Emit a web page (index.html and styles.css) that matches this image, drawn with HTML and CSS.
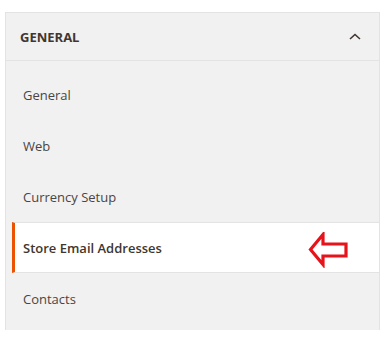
FILE: index.html
```html
<!DOCTYPE html>
<html lang="en">
<head>
    <meta charset="UTF-8">
    <meta name="viewport" content="width=device-width, initial-scale=1.0">
    <title>Configuration</title>
    <link rel="stylesheet" href="styles.css">
</head>
<body>

<div class="config-nav">
    <div class="nav-header">
        <span class="nav-title">GENERAL</span>
        <svg class="chevron" width="12" height="7" viewBox="0 0 12 7">
            <path d="M1 6 L6 1.5 L11 6" fill="none" stroke="#41362f" stroke-width="1.6"/>
        </svg>
    </div>
    <ul class="nav-items">
        <li class="nav-item">General</li>
        <li class="nav-item">Web</li>
        <li class="nav-item">Currency Setup</li>
        <li class="nav-item active">
            Store Email Addresses
            <!-- seta de anotação -->
            <svg class="pointer" width="42" height="36" viewBox="0 0 42 36">
                <polygon points="2.5,17.5 15,2.5 15,12 38,12 38,24 15,24 15,32.5" fill="none" stroke="#e8121a" stroke-width="3.2" stroke-linejoin="miter"/>
            </svg>
        </li>
        <li class="nav-item">Contacts</li>
    </ul>
</div>

</body>
</html>
```
FILE: styles.css
```css
* {
    margin: 0;
    padding: 0;
    box-sizing: border-box;
}

body {
    font-family: "Open Sans", Arial, sans-serif;
    background-color: #fff;
    color: #41362f;
    padding: 12px 0 0 5px;
}

.config-nav {
    width: 375px;
    height: 318px;
    background-color: #f1f1f1;
    border: 1px solid #e3e3e3;
    border-bottom: none;
}

.nav-header {
    display: flex;
    justify-content: space-between;
    align-items: center;
    height: 48px;
    padding: 0 18px 0 14px;
    border-bottom: 1px solid #e3e3e3;
}

.nav-title {
    font-size: 13px;
    font-weight: 700;
    color: #41362f;
}

.chevron {
    display: block;
}

.nav-items {
    list-style: none;
    padding-top: 8px;
}

.nav-item {
    position: relative;
    display: flex;
    align-items: center;
    height: 51px;
    padding-left: 17px;
    font-size: 13px;
    color: #4a4543;
}

.nav-item.active {
    margin-left: 6px;
    padding-left: 8px;
    background-color: #fff;
    border-left: 3px solid #eb5202;
    border-top: 1px solid #e3e3e3;
    border-bottom: 1px solid #e3e3e3;
    font-weight: 600;
    color: #41362f;
}

.pointer {
    position: absolute;
    left: 293px;
    top: 9px;
}
```
